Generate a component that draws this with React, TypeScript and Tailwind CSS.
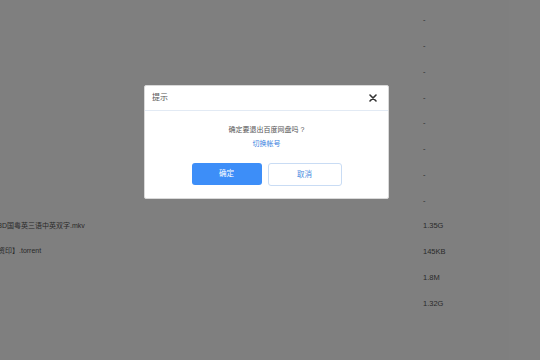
import React from "react";

const rows: { name: string; size: string }[] = [
  { name: "", size: "-" },
  { name: "", size: "-" },
  { name: "", size: "-" },
  { name: "", size: "-" },
  { name: "", size: "-" },
  { name: "", size: "-" },
  { name: "", size: "-" },
  { name: "", size: "-" },
  { name: "3D国粤英三语中英双字.mkv", size: "1.35G" },
  { name: "资印】.torrent", size: "145KB" },
  { name: "", size: "1.8M" },
  { name: "", size: "1.32G" },
];

export default function App() {
  return (
    <div
      className="relative w-[540px] h-[360px] overflow-hidden bg-white"
      style={{ fontFamily: '"Liberation Sans", "Noto Sans CJK SC", sans-serif' }}
    >
      <div className="flex flex-col pt-[7px]">
        {rows.map((r, i) => (
          <div key={i} className="flex items-center h-[25.75px] text-[#555]">
            <div className="w-[425px] -ml-[2px] whitespace-nowrap text-[7px]">{r.name}</div>
            <div className="text-[7.5px]">{r.size}</div>
          </div>
        ))}
      </div>

      <div className="absolute inset-0 bg-black/50" />

      <div className="absolute left-[144px] top-[85px] w-[245px] bg-white rounded-[2px] border border-[#d9d9d9] flex flex-col">
        <div className="h-[25px] flex items-center justify-between px-[7px] border-b border-[#e2eaf4]">
          <span className="text-[8px] text-[#555]">提示</span>
          <svg width="8" height="8" viewBox="0 0 8 8" className="mr-[4px]">
            <path d="M1 1 L7 7 M7 1 L1 7" stroke="#333" strokeWidth="1.6" strokeLinecap="round" />
          </svg>
        </div>
        <div className="flex flex-col items-center pt-[14px] pb-[12px]">
          <div className="text-[7px] leading-[10px] text-[#555]">确定要退出百度网盘吗 ?</div>
          <div className="mt-[4px] text-[7px] leading-[10px] text-[#3b82e0]">切换帐号</div>
          <div className="mt-[14px] flex gap-[6px]">
            <button className="w-[70px] h-[22px] rounded-[3px] bg-[#3d8ef8] text-white text-[7.5px]">确定</button>
            <button className="w-[74px] h-[23px] rounded-[3px] border border-[#c9dcf4] bg-white text-[#4a8be0] text-[7.5px]">取消</button>
          </div>
        </div>
      </div>
    </div>
  );
}
